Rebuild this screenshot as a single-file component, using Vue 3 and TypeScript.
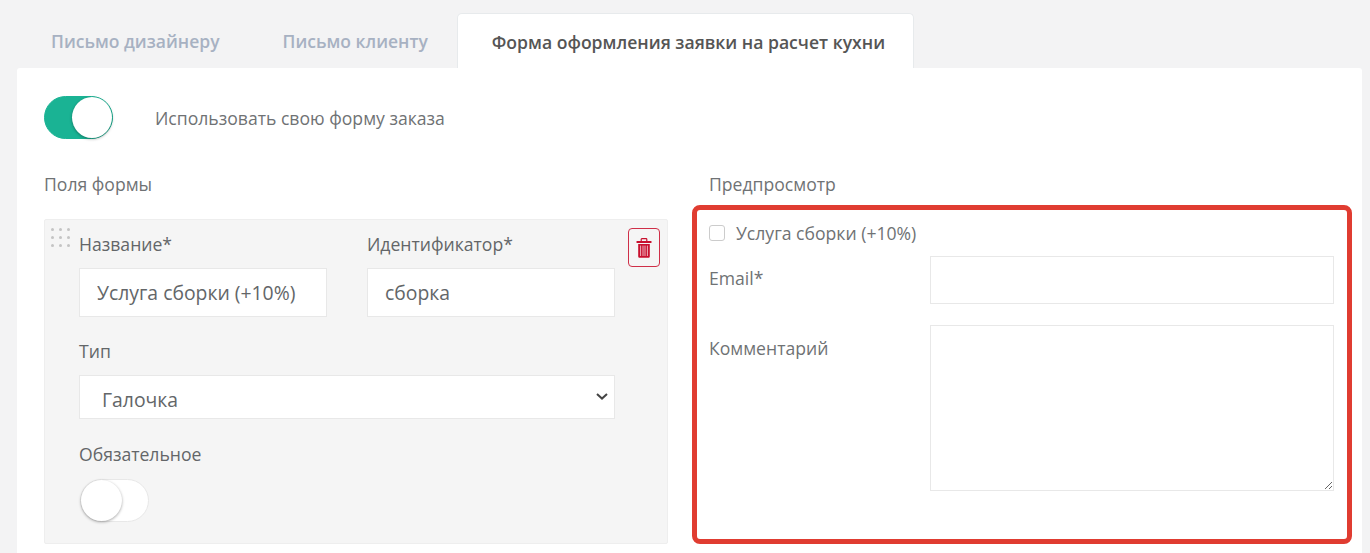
<script setup lang="ts">
import { ref } from 'vue';

const tabs = ['Письмо дизайнеру', 'Письмо клиенту', 'Форма оформления заявки на расчет кухни'];
const activeTab = ref(2);
const useOwnForm = ref(true);
const required = ref(false);
</script>

<template>
  <div class="page">
    <div class="tabs">
      <div
        v-for="(tab, i) in tabs"
        :key="tab"
        :class="['tab', { active: i === activeTab }]"
        @click="activeTab = i"
      >
        {{ tab }}
      </div>
    </div>

    <div class="card">
      <div class="own-form">
        <span :class="['switch', { on: useOwnForm }]" @click="useOwnForm = !useOwnForm">
          <span class="knob"></span>
        </span>
        <span class="own-label">Использовать свою форму заказа</span>
      </div>

      <div class="columns">
        <div>
          <div class="heading">Поля формы</div>
          <div class="field-panel">
            <div class="drag">
              <i v-for="n in 9" :key="n"></i>
            </div>
            <div class="field-body">
              <div class="two">
                <label class="group">
                  <span class="lbl">Название*</span>
                  <input class="inp" value="Услуга сборки (+10%)" />
                </label>
                <label class="group">
                  <span class="lbl">Идентификатор*</span>
                  <input class="inp" value="сборка" />
                </label>
              </div>
              <label class="group type-group">
                <span class="lbl">Тип</span>
                <span class="sel-wrap">
                  <select class="sel">
                    <option>Галочка</option>
                  </select>
                  <svg class="chevron" width="12" height="7" viewBox="0 0 12 7">
                    <path d="M1 1l5 4.6L11 1" fill="none" stroke="#444" stroke-width="2" />
                  </svg>
                </span>
              </label>
              <div class="group req-group">
                <span class="lbl">Обязательное</span>
                <span :class="['switch', { on: required }]" @click="required = !required">
                  <span class="knob"></span>
                </span>
              </div>
            </div>
            <button class="del" type="button">
              <svg width="16" height="20" viewBox="0 0 16 20">
                <path d="M5.2 3V1.4C5.2 1 5.5.7 5.9.7h4.2c.4 0 .7.3.7.7V3" fill="none" stroke="#c8102e" stroke-width="1.2" />
                <rect x="0.5" y="3" width="15" height="2" rx="0.5" fill="#c8102e" />
                <path d="M2.2 6h11.6v12.2c0 1-.6 1.5-1.5 1.5H3.7c-.9 0-1.5-.5-1.5-1.5z" fill="#c8102e" />
                <path d="M4.6 7.6v10.4M7 7.6v10.4M9 7.6v10.4M11.4 7.6v10.4" stroke="#eeb4be" stroke-width="1" />
              </svg>
            </button>
          </div>
        </div>

        <div class="preview">
          <div class="heading">Предпросмотр</div>
          <label class="check-row">
            <input class="check" type="checkbox" />
            <span>Услуга сборки (+10%)</span>
          </label>
          <div class="row">
            <span class="row-lbl">Email*</span>
            <input class="inp row-inp" />
          </div>
          <div class="row row-area">
            <span class="row-lbl">Комментарий</span>
            <textarea class="area"></textarea>
          </div>
          <div class="highlight"></div>
        </div>
      </div>
    </div>
  </div>
</template>

<style scoped>
.page {
  height: 553px;
  overflow: hidden;
  padding: 13px 8px 0 17px;
  box-sizing: border-box;
  background: #f3f3f4;
  font-family: "Open Sans", sans-serif;
  font-size: 17.6px;
  color: #6f7274;
}

.tabs {
  display: flex;
  height: 55px;
}

.tab {
  padding: 0 34px;
  font-size: 17.5px;
  line-height: 57px;
  font-weight: 600;
  color: #a7b1c2;
  cursor: pointer;
}

.tab:nth-child(2) {
  padding-left: 29px;
  padding-right: 29px;
}

.tab.active {
  padding: 0 28px 0 34px;
  font-size: 17.6px;
  color: #555;
  background: #fff;
  border: 1px solid #e7eaec;
  border-bottom: 0;
  border-radius: 5px 5px 0 0;
}

.card {
  height: 485px;
  padding: 28px 27px 0;
  box-sizing: border-box;
  background: #fff;
  border-radius: 3px 3px 0 0;
}

.own-form {
  display: flex;
  align-items: center;
  gap: 42px;
}

.switch {
  position: relative;
  display: block;
  width: 69px;
  height: 43px;
  box-sizing: border-box;
  background: #fff;
  border: 1px solid #e8e8e8;
  border-radius: 22px;
  cursor: pointer;
}

.switch.on {
  background: #1ab394;
  border-color: #1ab394;
}

.knob {
  position: absolute;
  top: 0;
  left: 0;
  width: 41px;
  height: 41px;
  background: #fff;
  border-radius: 50%;
  box-shadow: 0 1px 3px rgba(0, 0, 0, 0.35);
}

.switch.on .knob {
  left: 27px;
  width: 40px;
}

.columns {
  display: grid;
  grid-template-columns: 624px 625px;
  gap: 41px;
  margin-top: 33px;
}

.heading {
  height: 47px;
  line-height: 24px;
}

.field-panel {
  display: flex;
  height: 325px;
  padding: 8px 7px 0 6px;
  box-sizing: border-box;
  background: #f5f5f5;
  border: 1px solid #eee;
  border-radius: 2px;
}

.drag {
  display: grid;
  grid-template-columns: repeat(3, 3px);
  grid-auto-rows: 3px;
  gap: 5px;
  width: 28px;
  flex: none;
}

.drag i {
  background: #c4c4c4;
  border-radius: 50%;
}

.field-body {
  width: 536px;
  flex: none;
  padding-top: 4px;
}

.two {
  display: grid;
  grid-template-columns: 248px 248px;
  gap: 40px;
}

.group {
  display: block;
}

.lbl {
  display: block;
  line-height: 24px;
  color: #636668;
}

.inp {
  display: block;
  width: 100%;
  height: 49px;
  margin-top: 12px;
  padding: 0 17px;
  box-sizing: border-box;
  background: #fff;
  border: 1px solid #e8e8e8;
  outline: none;
  font: 19.36px "Open Sans", sans-serif;
  color: #636668;
}

.type-group {
  margin-top: 22px;
}

.sel-wrap {
  position: relative;
  display: block;
  margin-top: 12px;
}

.sel {
  display: block;
  width: 100%;
  height: 44px;
  padding: 0 22px;
  box-sizing: border-box;
  appearance: none;
  background: #fff;
  border: 1px solid #e8e8e8;
  outline: none;
  font: 19.36px "Open Sans", sans-serif;
  line-height: 47px;
  color: #636668;
}

.chevron {
  position: absolute;
  top: 18px;
  right: 7px;
  pointer-events: none;
}

.req-group {
  margin-top: 23px;
}

.req-group .switch {
  margin-top: 13px;
  margin-left: 1px;
}

.del {
  display: flex;
  align-items: center;
  justify-content: center;
  width: 32px;
  height: 39px;
  margin-left: 13px;
  padding: 0;
  background: transparent;
  border: 1px solid #cf2f48;
  border-radius: 4px;
}

.preview {
  position: relative;
}

.check-row {
  display: flex;
  align-items: center;
  gap: 11px;
  height: 26px;
  margin-top: 1px;
}

.check {
  width: 16px;
  height: 16px;
  margin: 0;
  appearance: none;
  background: #fff;
  border: 1px solid #ccc;
  border-radius: 3px;
}

.row {
  display: grid;
  grid-template-columns: 221px 404px;
  margin-top: 10px;
}

.row-lbl {
  padding-top: 10px;
}

.row-inp {
  height: 48px;
  margin-top: 0;
}

.row-area {
  margin-top: 21px;
}

.area {
  display: block;
  width: 100%;
  height: 166px;
  box-sizing: border-box;
  background: #fff;
  border: 1px solid #e8e8e8;
  outline: none;
}

.row-area .row-lbl {
  padding-top: 11px;
}

/* red frame drawn on top of the screenshot */
.highlight {
  position: absolute;
  top: 33px;
  left: -17px;
  width: 660px;
  height: 339px;
  box-sizing: border-box;
  border: 5px solid #e03c31;
  border-radius: 8px;
  pointer-events: none;
}
</style>
